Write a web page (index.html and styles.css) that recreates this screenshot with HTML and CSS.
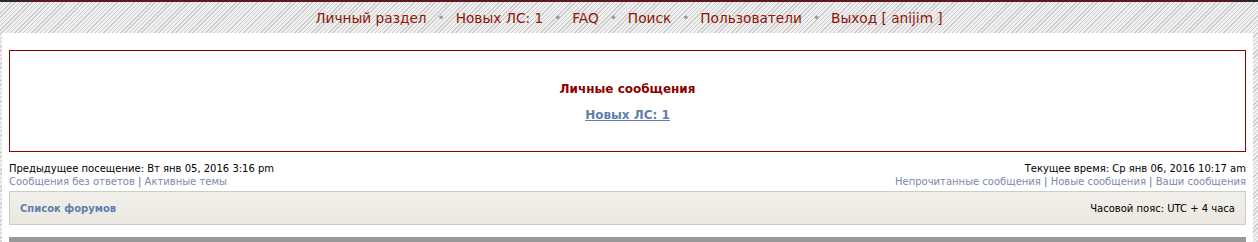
FILE: index.html
```html
<!DOCTYPE html>
<html lang="ru">

<head>
    <meta charset="UTF-8">
    <title>Личные сообщения</title>
    <link rel="stylesheet" href="styles.css">
</head>

<body>
    <div class="topline"></div>
    <div class="menu">
        <a href="#">Личный раздел</a>
        <span class="dot">&bull;</span>
        <a href="#">Новых ЛС: 1</a>
        <span class="dot">&bull;</span>
        <a href="#">FAQ</a>
        <span class="dot">&bull;</span>
        <a href="#">Поиск</a>
        <span class="dot">&bull;</span>
        <a href="#">Пользователи</a>
        <span class="dot">&bull;</span>
        <a href="#">Выход [ anijim ]</a>
    </div>
    <div class="wrap">
        <div class="message">
            <h2>Личные сообщения</h2>
            <a class="newpm" href="#">Новых ЛС: 1</a>
        </div>
        <div class="info">
            <div class="left">
                <div>Предыдущее посещение: Вт янв 05, 2016 3:16 pm</div>
                <div class="links">
                    <a href="#">Сообщения без ответов</a> | <a href="#">Активные темы</a>
                </div>
            </div>
            <div class="right">
                <div>Текущее время: Ср янв 06, 2016 10:17 am</div>
                <div class="links">
                    <a href="#">Непрочитанные сообщения</a> | <a href="#">Новые сообщения</a> | <a href="#">Ваши сообщения</a>
                </div>
            </div>
        </div>
        <div class="navbar">
            <a href="#">Список форумов</a>
            <span>Часовой пояс: UTC + 4 часа</span>
        </div>
        <div class="bottombar"></div>
    </div>
</body>

</html>
```

FILE: styles.css
```css
body {
    margin: 0;
    font-family: "DejaVu Sans", Verdana, sans-serif;
    background: repeating-linear-gradient(135deg, #cccccc 0 1px, #f0f0f0 1px 3px);
}

.topline {
    height: 2px;
    background: linear-gradient(to right, #1c2a22 0, #5a1820 3%, #5a1820 97%, #1c2a22 100%);
}

.menu {
    height: 31px;
    display: flex;
    justify-content: center;
    align-items: center;
    gap: 11px;
    font-size: 13.7px;
}

.menu a {
    color: #8f1508;
    text-decoration: none;
}

.menu .dot {
    color: #9a9a9a;
    font-size: 12px;
}

.wrap {
    background-color: white;
    margin: 0 5px 0 2px;
    padding: 17px 7px 0 7px;
}

.message {
    border: 1px solid #8b0000;
    height: 102px;
    box-sizing: border-box;
    text-align: center;
    padding-top: 31px;
}

.message h2 {
    margin: 0 0 8px 0;
    font-size: 12px;
    color: #8b0000;
}

.newpm {
    font-size: 12px;
    font-weight: bold;
    color: #5f7fae;
}

.info {
    display: flex;
    justify-content: space-between;
    font-size: 10px;
    line-height: 13px;
    color: #000;
    padding-top: 10px;
    padding-bottom: 3px;
}

.info .right {
    text-align: right;
}

.links {
    color: #5273a4;
}

.links a {
    color: #7b8aab;
    text-decoration: none;
}

.navbar {
    height: 34px;
    box-sizing: border-box;
    border: 1px solid #cccccc;
    background: linear-gradient(#f1efea, #ebe8e1);
    display: flex;
    justify-content: space-between;
    align-items: center;
    padding: 0 10px;
    font-size: 10px;
    color: #000;
}

.navbar a {
    color: #5f7fae;
    font-weight: bold;
    text-decoration: none;
}

.bottombar {
    margin-top: 12px;
    height: 6px;
    background-color: #999999;
}
```
